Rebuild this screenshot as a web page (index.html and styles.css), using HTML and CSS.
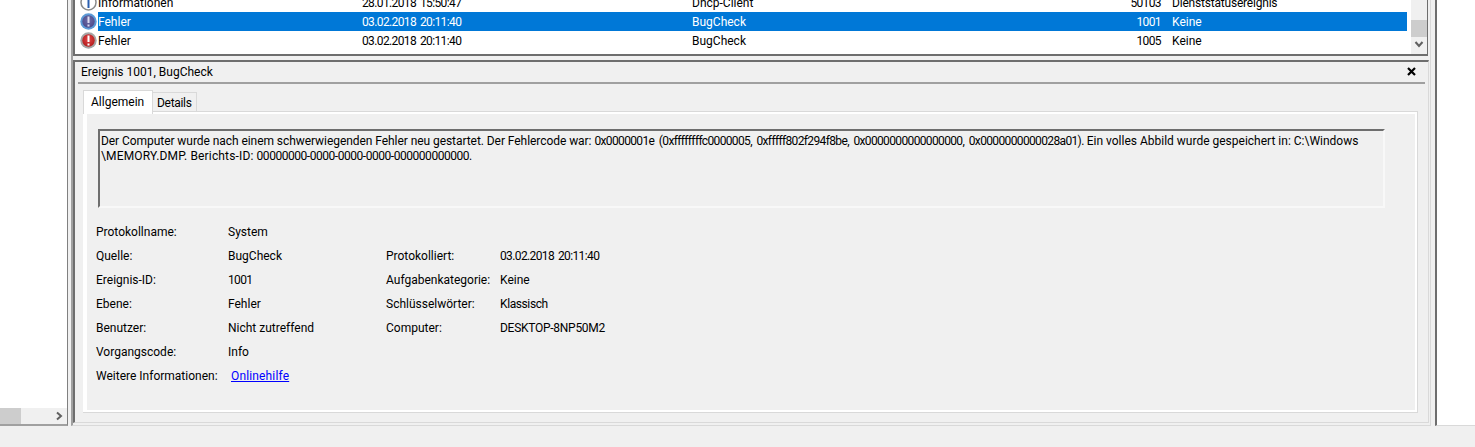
FILE: index.html
```html
<!DOCTYPE html>
<html lang="de">
<head>
<meta charset="utf-8">
<title>Ereignisanzeige</title>
<link rel="stylesheet" href="styles.css">
</head>
<body>
<svg class="defs" width="0" height="0">
  <defs>
    <radialGradient id="red" cx="50%" cy="40%" r="60%"><stop offset="0" stop-color="#e8474a"/><stop offset="1" stop-color="#b01c1c"/></radialGradient>
    <radialGradient id="slate" cx="50%" cy="40%" r="60%"><stop offset="0" stop-color="#6e6ca8"/><stop offset="1" stop-color="#4c4a8a"/></radialGradient>
  </defs>
</svg>
<div class="app">
  <aside class="tree">
    <div class="tree-body"></div>
    <div class="hscroll"><div class="hthumb"></div><svg class="arrow" width="8" height="10" viewBox="0 0 8 10"><path d="M2 1.5 L6 5 L2 8.5" fill="none" stroke="#606060" stroke-width="2"/></svg></div>
  </aside>
  <main class="center">
    <section class="list">
      <div class="rows">
        <div class="row">
          <svg class="ico" width="17" height="17" viewBox="0 0 17 17"><circle cx="8.5" cy="8.5" r="7.5" fill="#fff" stroke="#8a8a8a" stroke-width="1.5"/><rect x="7.5" y="6" width="2" height="8" fill="#2a5fb0"/></svg>
          <span class="c-level">Informationen</span><span class="c-date num">28.01.2018 15:50:47</span><span class="c-src">Dhcp-Client</span><span class="c-id num">50103</span><span class="c-cat narrow">Dienststatusereignis</span>
        </div>
        <div class="row">
          <svg class="ico" width="17" height="17" viewBox="0 0 17 17"><circle cx="8.5" cy="8.5" r="8.2" fill="#5c9ad6"/><circle cx="8.5" cy="8.5" r="6.2" fill="url(#slate)"/><rect x="7.5" y="3.5" width="2" height="6.5" fill="#dcdcf0"/><rect x="7.5" y="11.5" width="2" height="2" fill="#dcdcf0"/></svg>
          <div class="sel"><span class="c-level">Fehler</span><span class="c-date num">03.02.2018 20:11:40</span><span class="c-src">BugCheck</span><span class="c-id num">1001</span><span class="c-cat">Keine</span></div>
        </div>
        <div class="row">
          <svg class="ico" width="17" height="17" viewBox="0 0 17 17"><circle cx="8.5" cy="8.5" r="8.2" fill="#a6a6a6"/><circle cx="8.5" cy="8.5" r="6.2" fill="url(#red)"/><rect x="7.5" y="3.5" width="2" height="6.5" fill="#fff"/><rect x="7.5" y="11.5" width="2" height="2" fill="#fff"/></svg>
          <span class="c-level">Fehler</span><span class="c-date num">03.02.2018 20:11:40</span><span class="c-src">BugCheck</span><span class="c-id num">1005</span><span class="c-cat">Keine</span>
        </div>
      </div>
      <div class="vscroll"><div class="vtrack"><div class="vthumb"></div></div><svg class="arrow" width="10" height="8" viewBox="0 0 10 8"><path d="M1.5 2 L5 6 L8.5 2" fill="none" stroke="#606060" stroke-width="2"/></svg></div>
    </section>
    <section class="detail">
      <header class="detail-head">
        <span>Ereignis 1001, BugCheck</span>
        <svg class="close" width="9" height="9" viewBox="0 0 9 9"><path d="M1 1 L8 8 M8 1 L1 8" stroke="#000" stroke-width="2.2"/></svg>
      </header>
      <div class="tabs"><div class="tab tab-on">Allgemein</div><div class="tab tab-off">Details</div></div>
      <div class="pane">
        <div class="message"><span class="tight">Der Computer wurde nach einem schwerwiegenden Fehler neu gestartet. Der Fehlercode war:</span> <span class="num-long">0x0000001e (0xffffffffc0000005, 0xfffff802f294f8be, 0x0000000000000000, 0x0000000000028a01).</span> Ein volles Abbild wurde gespeichert in: C:\Windows<br><span class="loose">\MEMORY.DMP. Berichts-ID:</span> <span class="num-id">00000000-0000-0000-0000-000000000000.</span></div>
        <div class="props">
          <span>Protokollname:</span><span>System</span><span></span><span></span>
          <span>Quelle:</span><span>BugCheck</span><span>Protokolliert:</span><span class="num">03.02.2018 20:11:40</span>
          <span>Ereignis-ID:</span><span class="num">1001</span><span>Aufgabenkategorie:</span><span>Keine</span>
          <span>Ebene:</span><span>Fehler</span><span>Schlüsselwörter:</span><span class="narrower">Klassisch</span>
          <span>Benutzer:</span><span>Nicht zutreffend</span><span>Computer:</span><span class="host">DESKTOP-8NP50M2</span>
          <span>Vorgangscode:</span><span>Info</span><span></span><span></span>
          <span>Weitere Informationen:</span><span class="link-cell"><a href="#">Onlinehilfe</a></span><span></span><span></span>
        </div>
      </div>
    </section>
  </main>
  <aside class="right"></aside>
</div>
</body>
</html>
```
FILE: styles.css
```css
* { box-sizing: border-box; }
html, body { margin: 0; height: 447px; overflow: hidden; }
body { background: #f0f0f0; font: 12px/15px Roboto, "Open Sans", sans-serif; color: #000; }
.defs { position: absolute; }
.app { display: flex; height: 426px; }
.tree { width: 68px; background: #fff; border-right: 1px solid #808080; border-bottom: 2px solid #a0a0a0; display: flex; flex-direction: column; }
.tree-body { flex: 1; }
.hscroll { height: 16px; background: #f0f0f0; display: flex; align-items: center; justify-content: space-between; padding-right: 4px; }
.hthumb { width: 21px; height: 16px; background: #cdcdcd; }
.center { width: 1360px; margin-left: 3px; border-left: 2px solid #a0a0a0; border-right: 1px solid #d9d9d9; border-bottom: 1px solid #d9d9d9; display: flex; flex-direction: column; gap: 4px; }
.list { height: 56px; width: 1355px; background: #fff; border: solid #6e6e6e; border-width: 0 1px 2px 2px; display: flex; flex: none; }
.rows { flex: 1; margin-top: -7px; }
.row { height: 19px; display: flex; position: relative; white-space: nowrap; padding-left: 23px; }
.row > span, .sel > span { padding-top: 3px; }
.ico { position: absolute; left: 5px; top: 1px; }
.sel { display: flex; flex: 1; height: 19px; background: #0078d7; color: #fff; }
.c-level { width: 264px; flex: none; }
.c-date { width: 330px; flex: none; }
.c-src { width: 408px; flex: none; }
.c-id { width: 61px; flex: none; text-align: right; }
.c-cat { padding-left: 11px; flex: none; }
.num { letter-spacing: -0.62px; word-spacing: 1.5px; }
.num-long { letter-spacing: -0.64px; word-spacing: 2.2px; }
.num-id { letter-spacing: -0.46px; }
.tight { letter-spacing: -0.06px; }
.loose { letter-spacing: 0.16px; }
.host { letter-spacing: -0.27px; }
.narrow { letter-spacing: -0.2px; }
.narrower { letter-spacing: -0.4px; }
.vscroll { width: 16px; background: #f0f0f0; margin-left: 4px; display: flex; flex-direction: column; }
.vtrack { flex: 1; padding-top: 20px; }
.vthumb { height: 17px; background: #cdcdcd; }
.vscroll .arrow { margin: 0 auto 6px; }
.detail { flex: 1; width: 1356px; margin-bottom: 2px; border: solid #d9d9d9; border-width: 0 1px 1px 0; border-top: 2px solid #6e6e6e; border-left: 2px solid #6e6e6e; display: flex; flex-direction: column; }
.detail-head { height: 22px; margin: 0 3px; border-bottom: 2px solid #a0a0a0; display: flex; align-items: center; justify-content: space-between; padding: 1px 0 0 3px; flex: none; }
.close { margin: 0 9px 3px 0; }
.tabs { display: flex; align-items: flex-start; margin: 6px 0 0 8px; height: 21px; flex: none; }
.tab { height: 19px; margin-top: 2px; background: #f0f0f0; border: 1px solid #d9d9d9; border-bottom: 0; }
.tab-off { padding: 3px 4px 0; letter-spacing: -0.3px; }
.tab-on { height: 24px; margin-top: 0; padding: 4px 7px 0; background: #fff; margin-right: -1px; position: relative; z-index: 1; width: 70px; }
.pane { margin: 0 10px 9px 8px; flex: 1; border: solid #d9d9d9; border-width: 1px 1px 1px 0; background: #f0f0f0; box-shadow: inset 4px 2px 0 #fff, inset -2px -2px 0 #fff; padding: 17px 0 0 15px; }
.message { height: 79px; width: 1287px; border: 2px solid; border-color: #6e6e6e #f8f8f8 #f8f8f8 #6e6e6e; padding: 3px 1px 0; white-space: nowrap; }
.props { display: grid; grid-template-columns: 132px 158px 114px auto; grid-auto-rows: 24px; margin: 12px 0 0 -2px; align-items: center; }
.link-cell { padding-left: 3px; letter-spacing: 0.15px; }
a { color: #0000ff; text-decoration: underline; }
.right { flex: 1; background: #fff; border-left: 2px solid #6e6e6e; border-bottom: 1px solid #d9d9d9; margin-left: 4px; }
```
